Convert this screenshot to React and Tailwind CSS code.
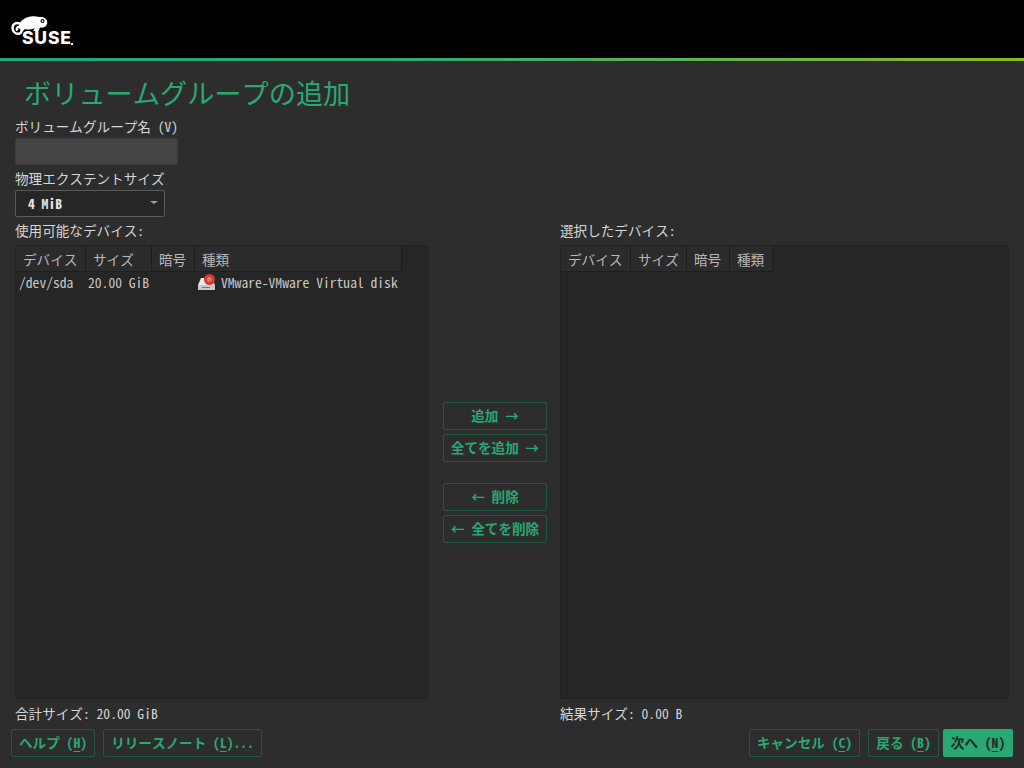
import React from 'react';

const font = "font-['Noto_Sans_Mono_CJK_JP','Noto_Sans_CJK_JP',monospace]";

const Logo = () => (
  <div className="relative w-[70px] h-[36px] ml-[11px] mt-[16px]">
    <svg width="38" height="22" viewBox="11 16 38 22" className="absolute left-0 top-0" fill="#fff">
      <path d="M19 26C20 19 29 15 36 16.500c3 .7 5 .3 7 .7 3.500.8 4.800 3.800 4 6.800-1 3.500-4.500 4-7 3.500L38.500 31H33l2-3c-3 1.500-7 2-10 1l-2 2-4-3z" />
      <path d="M22 25C17 21 12.500 23.500 12.500 28c0 4 3.500 6.500 7 5.500 3-1 3-5.500 0-6.500-2.500-.5-3.500 2-2 3.500" fill="none" stroke="#fff" strokeWidth="2.400" />
      <circle cx="42.500" cy="21" r="2" fill="#000" />
      <circle cx="42.500" cy="21" r=".9" fill="#fff" />
    </svg>
    <span className="absolute left-[11px] top-[8px] text-[17.500px] leading-[28px] font-extrabold tracking-[0.8px] text-white font-['Inter',sans-serif]">SUSE</span>
    <span className="absolute left-[60px] top-[27px] w-[2px] h-[2px] bg-white" />
  </div>
);

const Btn = ({ className = '', children }) => (
  <button className={`h-[28px] pb-[2px] flex items-center justify-center rounded-[2px] border border-[#1c5c43] text-[#2aa872] font-bold text-[13.600px] leading-[16px] whitespace-pre ${className}`}>
    {children}
  </button>
);

const Key = ({ children }) => <span className="underline underline-offset-[3px]">{children}</span>;

const Head = ({ w, children }) => (
  <div className={`h-[26px] shrink-0 flex items-center pl-[7px] bg-[#2b2b2b] border-r border-b border-[#1d1d1d] text-[#b9b9b9] ${w}`}>{children}</div>
);

const DiskIcon = () => (
  <svg width="20" height="17" viewBox="0 0 20 17" className="shrink-0">
    <path d="M4 4h10l4 7H1z" fill="#e8e8e8" />
    <rect x="1" y="11" width="17" height="5" fill="#c9c9c9" />
    <rect x="5" y="13" width="8" height="1" fill="#777" />
    <circle cx="12.500" cy="5.500" r="5.500" fill="#e03434" />
    <circle cx="12.500" cy="5.500" r="2.500" fill="#d98f3c" />
    <path d="M12.500 5.500h2.500a2.500 2.500 0 0 1-2.500 2.500z" fill="#6a7fc0" />
  </svg>
);

export default function App() {
  return (
    <div className={`w-[1024px] h-[768px] flex flex-col overflow-hidden bg-[#2d2d2d] text-[#d6d6d6] text-[13.600px] leading-[16px] ${font}`}>
      <div className="h-[58px] shrink-0 bg-black"><Logo /></div>
      <div className="h-[3px] shrink-0 bg-gradient-to-r from-[#1fa87a] via-[#2fa96c] via-40% to-[#86b928]" />

      <div className="h-[57px] shrink-0 pl-[24px] pt-[13px] text-[27.200px] leading-[36px] text-[#2aa872]">ボリュームグループの追加</div>

      <div className="px-[15px] flex-1 flex flex-col min-h-0">
        <div className="h-[18px]">ボリュームグループ名 (V)</div>
        <div className="mt-[2px] h-[27px] w-[163px] rounded-[2px] bg-[#444444] border border-[#3a3a3a]" />
        <div className="mt-[5px] h-[18px]">物理エクステントサイズ</div>
        <div className="mt-[2px] h-[27px] w-[150px] pb-[2px] flex items-center justify-between pl-[12px] pr-[6px] rounded-[2px] bg-[#262626] border border-[#5a5a5a] font-bold text-[#e8e8e8]">
          <span>4 MiB</span>
          <span className="w-0 h-0 border-x-[4px] border-x-transparent border-t-[3px] border-t-[#a0a0a0]" />
        </div>

        <div className="mt-[5px] flex-1 min-h-0 flex">
          <div className="w-[414px] shrink-0 flex flex-col">
            <div className="h-[18px]">使用可能なデバイス:</div>
            <div className="mt-[5px] flex-1 min-h-0 rounded-[2px] bg-[#262626] border border-[#222222]">
              <div className="flex">
                <Head w="w-[70px]">デバイス</Head>
                <Head w="w-[66px]">サイズ</Head>
                <Head w="w-[43px]">暗号</Head>
                <Head w="w-[207px]">種類</Head>
              </div>
              <div className="flex items-center h-[20px] text-[#c8c8c8]">
                <span className="w-[72px] pl-[3px]">/dev/sda</span>
                <span className="w-[109px]">20.00 GiB</span>
                <DiskIcon />
                <span className="ml-[4px]">VMware-VMware Virtual disk</span>
              </div>
            </div>
            <div className="mt-[6px] h-[18px]">合計サイズ: 20.00 GiB</div>
          </div>

          <div className="w-[104px] ml-[14px] shrink-0 flex flex-col pt-[23px] pb-[24px] justify-center">
            <Btn>追加 →</Btn>
            <Btn className="mt-[4px]">全てを追加 →</Btn>
            <Btn className="mt-[21px]">← 削除</Btn>
            <Btn className="mt-[4px]">← 全てを削除</Btn>
          </div>

          <div className="w-[449px] ml-[13px] shrink-0 flex flex-col">
            <div className="h-[18px]">選択したデバイス:</div>
            <div className="mt-[5px] flex-1 min-h-0 rounded-[2px] bg-[#262626] border border-[#222222]">
              <div className="flex">
                <Head w="w-[70px]">デバイス</Head>
                <Head w="w-[56px]">サイズ</Head>
                <Head w="w-[43px]">暗号</Head>
                <Head w="w-[43px]">種類</Head>
              </div>
            </div>
            <div className="mt-[6px] h-[18px]">結果サイズ: 0.00 B</div>
          </div>
        </div>
      </div>

      <div className="mt-[6px] mb-[11px] px-[11px] flex">
        <Btn className="w-[84px]">ヘルプ (<Key>H</Key>)</Btn>
        <Btn className="w-[159px] ml-[8px]">リリースノート (<Key>L</Key>)...</Btn>
        <Btn className="w-[111px] ml-auto">キャンセル (<Key>C</Key>)</Btn>
        <Btn className="w-[71px] ml-[8px]">戻る (<Key>B</Key>)</Btn>
        <Btn className="w-[70px] ml-[4px] !bg-[#2aa872] !border-[#2aa872] !text-[#1f2a25]">次へ (<Key>N</Key>)</Btn>
      </div>
    </div>
  );
}
